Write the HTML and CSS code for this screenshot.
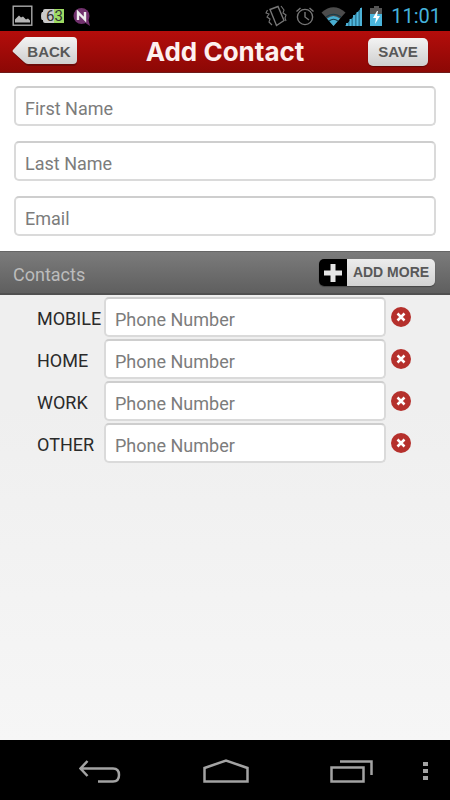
FILE: index.html
```html
<!DOCTYPE html>
<html lang="en">
<head>
<meta charset="utf-8">
<meta name="viewport" content="width=device-width, initial-scale=1">
<title>Add Contact</title>
<link rel="stylesheet" href="styles.css">
</head>
<body>
<div class="status">
  <svg class="status-left" width="82" height="24" viewBox="0 0 82 24" aria-hidden="true">
    <rect x="1.2" y="2.2" width="18.6" height="19" fill="none" stroke="#a9a9a9" stroke-width="1.4"/>
    <path d="M3 18.5v-3l4-4 2 2 2-1 3 3 2-1 2 2v2z" fill="#b5b5b5"/>
    <path d="M33 5h18v14H33q-2 0-2-2v-1h-1q-1-1-1-4t1-4h1V7q0-2 2-2z" fill="#c9c9c9"/>
    <path d="M42 5h10v14H42z" fill="#9edb63"/>
    <circle cx="69.500" cy="12" r="8" fill="#71316d"/>
    <path d="M72 18l6 4-2-8z" fill="#71316d"/>
    <path d="M66 16V8.500l7 7V8" fill="none" stroke="#eee" stroke-width="2.400"/>
    <text x="34" y="17" class="battery-text">63</text>
  </svg>
  <div class="status-right">
    <svg width="119" height="24" viewBox="0 0 119 24" aria-hidden="true">
      <g fill="none" stroke="#777" stroke-width="1.4">
        <path d="M6 5.500l8-3 6 14-7.500 5z"/>
        <path d="M3.500 6l-1.500 3 3 1-2 3 3 2-1 3 3 3M17 2l3 4-1 3 3 2-1 3 1 3" stroke-width="1.1"/>
        <circle cx="41" cy="13" r="7.6"/>
        <path d="M41 8v5l4 3M32.500 7.500l4-3.500M45.500 4l4 3.500"/>
      </g>
      <path d="M57.500 8.500Q69.500-2 81.500 8.500L69.500 22z" fill="#4c4c4c"/>
      <path d="M63 14.500q6.500-5 13 0L69.500 22z" fill="#47aed2"/>
      <path d="M62 13q7.500-5.500 15 0M65 17q4.500-3.500 9 0" fill="none" stroke="#173b49" stroke-width="1.200"/>
      <path d="M81 22L98 3v19z" fill="#2f7e9c"/>
      <path d="M83 22v-3M86.500 22v-7M90 22V11M93.500 22V8M97 22V4" stroke="#50b9df" stroke-width="1.800"/>
      <path d="M110 2h5v2h3v18h-12V4h4z" fill="#555"/>
      <path d="M106 10h12v12h-12z" fill="#4ab5dc"/>
      <path d="M113 7l-4 7h3l-1 6 5-8h-3l1-5z" fill="#fff"/>
    </svg>
    <span class="clock">11:01</span>
  </div>
</div>
<header class="header">
  <button class="back" type="button">
    <svg class="back-shape" width="66" height="31" viewBox="0 0 66 31" aria-hidden="true">
      <defs><linearGradient id="silver" x1="0" y1="0" x2="0" y2="1"><stop offset="0" stop-color="#f3f3f3"/><stop offset="1" stop-color="#cfcfcf"/></linearGradient></defs>
      <path d="M14 2h47q4 0 4 4v20q0 4-4 4H16q-2 0-4-3L1 17q-1-1 0-2L11 4q2-2 3-2z" fill="#6d0907"/>
      <path d="M14 1h47q4 0 4 4v19q0 4-4 4H16q-2 0-4-2L1 16q-1-1 0-2L11 3q2-2 3-2z" fill="url(#silver)"/>
    </svg>
    <span class="back-text">BACK</span>
  </button>
  <h1 class="title">Add Contact</h1>
  <button class="save" type="button">SAVE</button>
</header>
<main class="main">
  <form class="names">
    <input class="field" type="text" placeholder="First Name" aria-label="First Name">
    <input class="field" type="text" placeholder="Last Name" aria-label="Last Name">
    <input class="field" type="email" placeholder="Email" aria-label="Email">
  </form>
  <div class="section">
    <h2 class="section-title">Contacts</h2>
    <button class="add" type="button">
      <span class="add-icon"><svg width="18" height="18" viewBox="0 0 18 18" aria-hidden="true"><path d="M9 0v18M0 9h18" stroke="#e6e6e6" stroke-width="5"/></svg></span>
      <span class="add-text">ADD MORE</span>
    </button>
  </div>
  <div class="phones">
    <div class="row">
      <label class="label" for="mobile">MOBILE</label>
      <input class="field" id="mobile" type="tel" placeholder="Phone Number">
      <button class="remove" type="button" aria-label="Remove mobile"><svg width="20" height="20" viewBox="0 0 20 20"><circle cx="10" cy="10" r="10" fill="#b5302c"/><path d="M6.500 6.500l7 7M13.500 6.500l-7 7" stroke="#fff" stroke-width="2.500"/></svg></button>
    </div>
    <div class="row">
      <label class="label" for="home">HOME</label>
      <input class="field" id="home" type="tel" placeholder="Phone Number">
      <button class="remove" type="button" aria-label="Remove home"><svg width="20" height="20" viewBox="0 0 20 20"><circle cx="10" cy="10" r="10" fill="#b5302c"/><path d="M6.500 6.500l7 7M13.500 6.500l-7 7" stroke="#fff" stroke-width="2.500"/></svg></button>
    </div>
    <div class="row">
      <label class="label" for="work">WORK</label>
      <input class="field" id="work" type="tel" placeholder="Phone Number">
      <button class="remove" type="button" aria-label="Remove work"><svg width="20" height="20" viewBox="0 0 20 20"><circle cx="10" cy="10" r="10" fill="#b5302c"/><path d="M6.500 6.500l7 7M13.500 6.500l-7 7" stroke="#fff" stroke-width="2.500"/></svg></button>
    </div>
    <div class="row">
      <label class="label" for="other">OTHER</label>
      <input class="field" id="other" type="tel" placeholder="Phone Number">
      <button class="remove" type="button" aria-label="Remove other"><svg width="20" height="20" viewBox="0 0 20 20"><circle cx="10" cy="10" r="10" fill="#b5302c"/><path d="M6.500 6.500l7 7M13.500 6.500l-7 7" stroke="#fff" stroke-width="2.500"/></svg></button>
    </div>
  </div>
</main>
<nav class="nav">
  <button class="nav-btn" type="button" aria-label="Back"><svg width="42" height="26" viewBox="0 0 42 26" fill="none" stroke="#a3a3a3" stroke-width="2.500"><path d="M1 9.500h33q6 0 6 6.500t-6 6.500H19M8.500 2L1.500 9.500l7 7.500"/></svg></button>
  <button class="nav-btn" type="button" aria-label="Home"><svg width="46" height="26" viewBox="0 0 46 26" fill="none" stroke="#a3a3a3" stroke-width="2.500"><path d="M1.500 9L23 1.500 44.500 9v13.500h-43z"/></svg></button>
  <button class="nav-btn" type="button" aria-label="Recent apps"><svg width="44" height="26" viewBox="0 0 44 26" fill="none" stroke="#a3a3a3" stroke-width="2.500"><path d="M1.500 8.500h32v14h-32zM10 2.500h31.500V16"/></svg></button>
  <button class="nav-btn nav-more" type="button" aria-label="More"><svg width="5" height="22" viewBox="0 0 5 22" fill="#a3a3a3"><path d="M0 1h5v4H0zM0 8h5v4H0zM0 15h5v4H0z"/></svg></button>
</nav>
</body>
</html>
```
FILE: styles.css
```css
* { box-sizing: border-box; }
body {
  margin: 0;
  min-height: 100vh;
  display: flex;
  flex-direction: column;
  background: #000;
  font-family: Roboto, sans-serif;
  font-size: 18px;
}
button {
  border: 0;
  padding: 0;
  background: none;
  font: bold 15px "Liberation Sans", sans-serif;
  color: #585858;
}
svg { display: block; }

.status {
  height: 31px;
  padding: 0 9px 0 12px;
  display: flex;
  justify-content: space-between;
  align-items: center;
}
.battery-text { font: 15px Roboto, sans-serif; fill: #333; }
.status-right { display: flex; align-items: center; gap: 8px; }
.clock { color: #45b3dc; font-size: 20px; line-height: 24px; }

.header {
  height: 42px;
  padding: 0 22px 0 12px;
  display: grid;
  grid-template-columns: 66px 1fr 60px;
  align-items: center;
  background: linear-gradient(#b40d0b, #8c0805);
  border-bottom: 1px solid #6e1a18;
}
.back { position: relative; height: 31px; }
.back-shape { position: absolute; top: 0; left: 0; }
.back-text { position: relative; padding-left: 8px; }
.title {
  margin: 0;
  padding-left: 4px;
  text-align: center;
  font: bold 26px Inter, sans-serif;
  color: #fdf0ef;
}
.save {
  height: 28px;
  border-radius: 5px;
  background: linear-gradient(#f3f3f3, #cfcfcf);
  box-shadow: 0 1px 1px #5e0705;
}

.main {
  flex: 1;
  background: linear-gradient(#efefef 50%, #f6f6f6);
}
.names {
  padding: 13px 14px 15px;
  display: grid;
  gap: 15px;
  background: #fff;
}
.field {
  width: 100%;
  min-width: 0;
  height: 40px;
  padding: 4px 9px 0;
  border: 2px solid #dadada;
  border-top-color: #cecece;
  border-radius: 5px;
  background: #fff;
  font: 18px Roboto, sans-serif;
  color: #222;
}
.field::placeholder { color: #7c7c7c; opacity: 1; }

.section {
  height: 44px;
  padding: 0 15px 0 13px;
  display: flex;
  justify-content: space-between;
  align-items: center;
  background: linear-gradient(#7b7b7b, #5f5f5f);
  border-top: 1px solid #666;
  border-bottom: 2px solid #505050;
}
.section-title {
  margin: 0;
  padding-top: 3px;
  font-size: 18px;
  font-weight: 400;
  color: #bcbcbc;
}
.add {
  display: flex;
  height: 27px;
  border-radius: 5px;
  overflow: hidden;
  box-shadow: 0 1px 1px #444;
  font-size: 14px;
}
.add-icon {
  width: 28px;
  height: 27px;
  display: grid;
  place-items: center;
  background: #000;
}
.add-text {
  width: 88px;
  line-height: 27px;
  background: linear-gradient(#ececec, #d2d2d2);
}

.phones {
  padding: 2px 39px 0 37px;
  display: grid;
  gap: 2px;
}
.row {
  display: grid;
  grid-template-columns: 67px 1fr 25px;
  align-items: center;
}
.label { padding-top: 3px; color: #2a2a2a; }
.remove { width: 20px; height: 20px; justify-self: end; }

.nav {
  height: 60px;
  padding-left: 37px;
  display: grid;
  grid-template-columns: 1fr 1fr 1fr 35px;
}
.nav-btn { display: grid; place-items: center; padding-top: 3px; }
.nav-more { justify-items: start; padding-left: 8px; }
```
